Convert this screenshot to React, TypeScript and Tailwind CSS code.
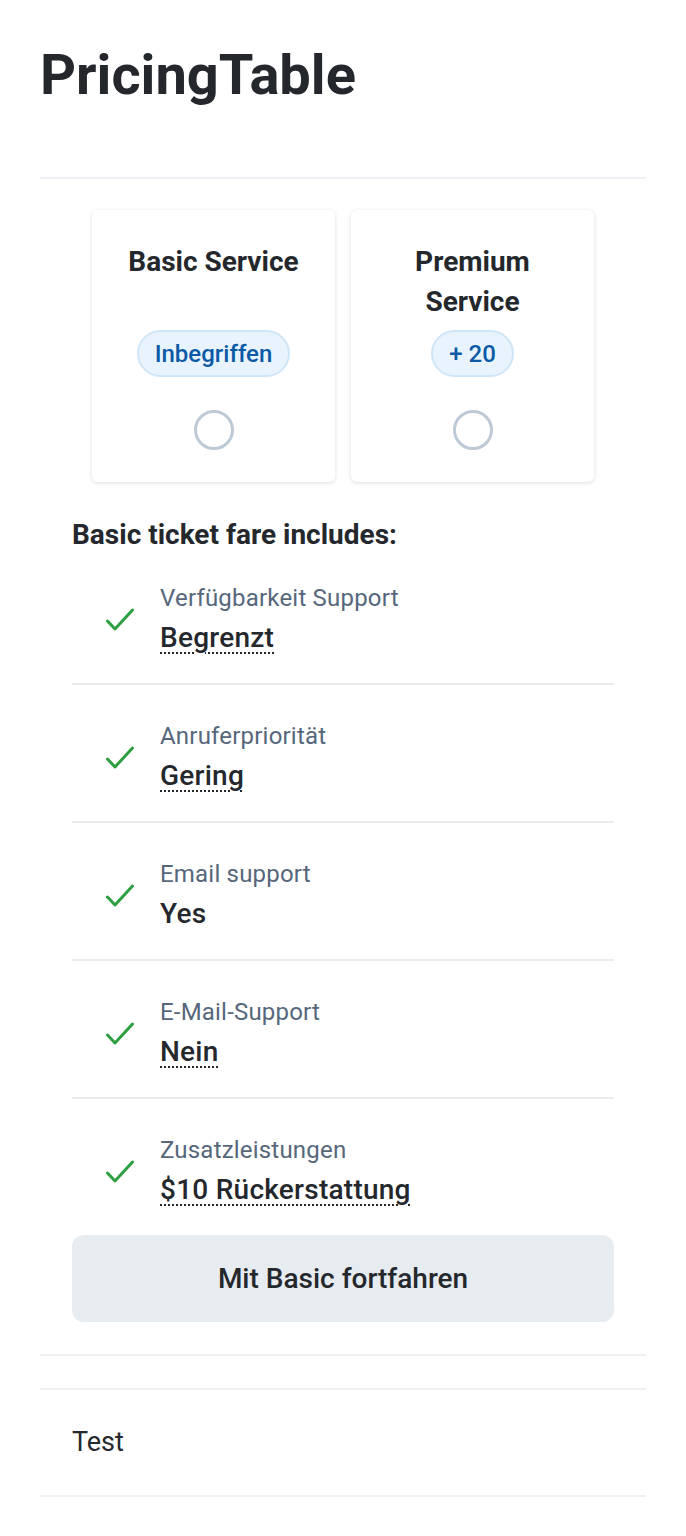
import React from "react";

type Feature = { label: string; value: string; dotted: boolean };

const features: Feature[] = [
  { label: "Verfügbarkeit Support", value: "Begrenzt", dotted: true },
  { label: "Anruferpriorität", value: "Gering", dotted: true },
  { label: "Email support", value: "Yes", dotted: false },
  { label: "E-Mail-Support", value: "Nein", dotted: true },
  { label: "Zusatzleistungen", value: "$10 Rückerstattung", dotted: true },
];

function CheckIcon() {
  return (
    <svg width="28" height="24" viewBox="0 0 28 24" fill="none" className="shrink-0">
      <polyline
        points="1.5,13 9,21 26.5,2"
        stroke="#2e9f40"
        strokeWidth="3"
        strokeLinecap="round"
        strokeLinejoin="round"
      />
    </svg>
  );
}

function PlanCard({ title, badge }: { title: string; badge: string }) {
  return (
    <div className="flex flex-col items-center rounded-[6px] bg-white px-4 pt-8 pb-8 shadow-[0_1px_4px_rgba(0,0,0,0.14)]">
      <div className="min-h-[80px] text-center text-[28px] leading-[40px] font-bold text-[#24282d]">{title}</div>
      <div className="mt-2 flex h-[47px] items-center rounded-full border-2 border-[#cfe5f8] bg-[#e8f3fd] px-[16px] text-[24px] font-medium text-[#0b5aa6]">
        {badge}
      </div>
      <div className="mt-[33px] h-[40px] w-[40px] rounded-full border-[3px] border-[#bdcad6]" />
    </div>
  );
}

export default function App() {
  return (
    <div className="min-h-screen bg-white px-10 pt-10 pb-10 font-['Roboto',sans-serif] text-[#24282d]">
      <h1 className="text-[56px] leading-[70px] font-bold">PricingTable</h1>

      <div className="mt-[67px] border-t-2 border-[#edf1f5]">
        <div className="px-8 pt-[31px]">
          <div className="grid grid-cols-2 gap-4 px-5">
            <PlanCard title="Basic Service" badge="Inbegriffen" />
            <PlanCard title="Premium Service" badge="+ 20" />
          </div>

          <h2 className="mt-[33px] text-[28px] leading-[40px] font-bold">Basic ticket fare includes:</h2>

          <ul>
            {features.map((f, i) => (
              <li
                key={f.label}
                className={
                  i === 0
                    ? "flex items-center gap-[26px] pl-[34px] pt-[27px] pb-[25px]"
                    : "flex items-center gap-[26px] border-t-2 border-[#e8ecef] pl-[34px] pt-[35px] pb-[25px]"
                }
              >
                <CheckIcon />
                <div>
                  <div className="text-[24px] leading-[32px] tracking-[0.2px] text-[#56677c]">{f.label}</div>
                  <div
                    className={
                      f.dotted
                        ? "mt-1 text-[28px] leading-[40px] font-medium tracking-[0.25px] underline decoration-dotted decoration-2 underline-offset-[5px]"
                        : "mt-1 text-[28px] leading-[40px] font-medium tracking-[0.25px]"
                    }
                  >
                    {f.value}
                  </div>
                </div>
              </li>
            ))}
          </ul>

          <button className="flex h-[87px] w-full items-center justify-center rounded-xl bg-[#e7ecf1] text-[28px] font-medium text-[#24282d]">
            Mit Basic fortfahren
          </button>
        </div>
      </div>

      <div className="mt-[32px] h-[34px] border-t-2 border-[#edf1f5]" />
      <div className="border-t-2 border-b-2 border-[#edf1f5] px-8 pt-[32px] pb-[33px] text-[27px] leading-[40px]">
        Test
      </div>
    </div>
  );
}
